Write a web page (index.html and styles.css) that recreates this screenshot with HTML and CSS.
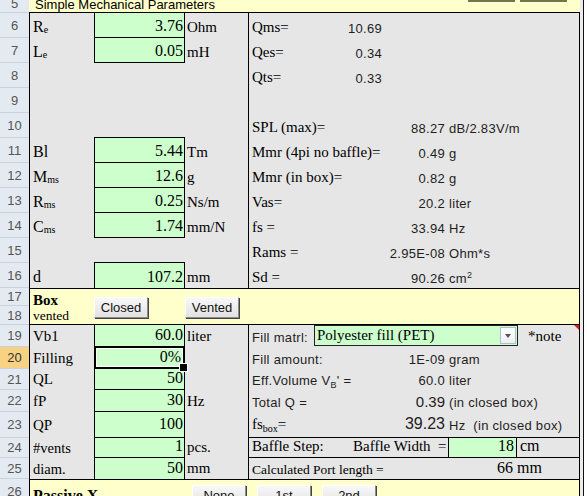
FILE: index.html
```html
<!DOCTYPE html>
<html lang="en">
<head>
<meta charset="utf-8">
<title>Simple Mechanical Parameters</title>
<link rel="stylesheet" href="styles.css">
</head>
<body>
<div class="sheet">
  <div class="heads">
    <div class="rh h13 r5">5</div>
    <div class="rh h25">6</div>
    <div class="rh h25">7</div>
    <div class="rh h25">8</div>
    <div class="rh h25">9</div>
    <div class="rh h25">10</div>
    <div class="rh h25">11</div>
    <div class="rh h25">12</div>
    <div class="rh h25">13</div>
    <div class="rh h25">14</div>
    <div class="rh h25">15</div>
    <div class="rh h25">16</div>
    <div class="rh h18">17</div>
    <div class="rh h19">18</div>
    <div class="rh h22">19</div>
    <div class="rh h22 cur">20</div>
    <div class="rh h21">21</div>
    <div class="rh h22">22</div>
    <div class="rh h26">23</div>
    <div class="rh h20">24</div>
    <div class="rh h21">25</div>
    <div class="rh h25">26</div>
  </div>

  <div class="grid">
    <div class="title">
      <span class="title-text">Simple Mechanical Parameters</span>
      <div class="tbtns"><span class="tbtn"></span><span class="tbtn"></span></div>
    </div>

    <div class="upper">
      <div class="row h25">
        <div class="lab">R<span class="sm">e</span></div>
        <div class="val g">3.76</div>
        <div class="unit">Ohm</div>
        <div class="rp"><span class="k q">Qms=</span><span class="v q">10.69</span></div>
      </div>
      <div class="row h25">
        <div class="lab">L<span class="sm">e</span></div>
        <div class="val g">0.05</div>
        <div class="unit">mH</div>
        <div class="rp"><span class="k q">Qes=</span><span class="v q">0.34</span></div>
      </div>
      <div class="row h25">
        <div class="lab"></div>
        <div class="val"></div>
        <div class="unit"></div>
        <div class="rp"><span class="k q">Qts=</span><span class="v q">0.33</span></div>
      </div>
      <div class="row h25">
        <div class="lab"></div>
        <div class="val"></div>
        <div class="unit"></div>
        <div class="rp"></div>
      </div>
      <div class="row h25">
        <div class="lab"></div>
        <div class="val cap"></div>
        <div class="unit"></div>
        <div class="rp"><span class="k m">SPL (max)=</span><span class="v m">88.27</span><span class="u">dB/2.83V/m</span></div>
      </div>
      <div class="row h25">
        <div class="lab">Bl</div>
        <div class="val g">5.44</div>
        <div class="unit">Tm</div>
        <div class="rp"><span class="k m">Mmr (4pi no baffle)=</span><span class="v m">0.49</span><span class="u">g</span></div>
      </div>
      <div class="row h25">
        <div class="lab">M<span class="sm">ms</span></div>
        <div class="val g">12.6</div>
        <div class="unit">g</div>
        <div class="rp"><span class="k m">Mmr (in box)=</span><span class="v m">0.82</span><span class="u">g</span></div>
      </div>
      <div class="row h25">
        <div class="lab">R<span class="sm">ms</span></div>
        <div class="val g">0.25</div>
        <div class="unit">Ns/m</div>
        <div class="rp"><span class="k m">Vas=</span><span class="v m">20.2</span><span class="u">liter</span></div>
      </div>
      <div class="row h25">
        <div class="lab">C<span class="sm">ms</span></div>
        <div class="val g">1.74</div>
        <div class="unit">mm/N</div>
        <div class="rp"><span class="k m">fs =</span><span class="v m">33.94</span><span class="u">Hz</span></div>
      </div>
      <div class="row h25">
        <div class="lab"></div>
        <div class="val cap"></div>
        <div class="unit"></div>
        <div class="rp"><span class="k m">Rams =</span><span class="v m">2.95E-08</span><span class="u">Ohm*s</span></div>
      </div>
      <div class="row h25">
        <div class="lab">d</div>
        <div class="val g nb">107.2</div>
        <div class="unit">mm</div>
        <div class="rp"><span class="k m">Sd =</span><span class="v m">90.26</span><span class="u">cm<sup>2</sup></span></div>
      </div>
    </div>

    <div class="boxband">
      <div class="boxlab"><b>Box</b><span>vented</span></div>
      <div class="btn">Closed</div>
      <div class="btn">Vented</div>
    </div>

    <div class="lower">
      <div class="row h22">
        <div class="lab">Vb1</div>
        <div class="val g">60.0</div>
        <div class="unit">liter</div>
        <div class="rp fill note">
          <span class="k sans">Fill matrl:</span>
          <div class="dd"><span class="dd-text">Polyester fill (PET)</span><span class="arrow"></span></div>
          <span class="note-t">*note</span>
        </div>
      </div>
      <div class="row h22">
        <div class="lab">Filling</div>
        <div class="val g sel">0%</div>
        <div class="unit"></div>
        <div class="rp"><span class="k m sans">Fill amount:</span><span class="v m">1E-09</span><span class="u">gram</span></div>
      </div>
      <div class="row h21">
        <div class="lab">QL</div>
        <div class="val g">50</div>
        <div class="unit"></div>
        <div class="rp"><span class="k m sans">Eff.Volume V<sub>B</sub>' =</span><span class="v m">60.0</span><span class="u">liter</span></div>
      </div>
      <div class="row h22">
        <div class="lab">fP</div>
        <div class="val g">30</div>
        <div class="unit">Hz</div>
        <div class="rp"><span class="k m sans">Total Q =</span><span class="v m big">0.39</span><span class="u">(in closed box)</span></div>
      </div>
      <div class="row h26">
        <div class="lab">QP</div>
        <div class="val g">100</div>
        <div class="unit"></div>
        <div class="rp sep"><span class="k m">fs<sub>box</sub>=</span><span class="v m big2">39.23</span><span class="u">Hz&nbsp; (in closed box)</span></div>
      </div>
      <div class="row h20">
        <div class="lab s">#vents</div>
        <div class="val g">1</div>
        <div class="unit">pcs.</div>
        <div class="rp baffle"><span class="bs">Baffle Step:</span><span class="bwl">Baffle Width  =</span><span class="bw">18</span><span class="bu">cm</span></div>
      </div>
      <div class="row h21">
        <div class="lab s">diam.</div>
        <div class="val g nb">50</div>
        <div class="unit">mm</div>
        <div class="rp"><span class="k port">Calculated Port length =</span><span class="v port">66</span><span class="u port">mm</span></div>
      </div>
    </div>

    <div class="xband">
      <div class="xlab">Passive X</div>
      <div class="btn">None</div>
      <div class="btn">1st</div>
      <div class="btn">2nd</div>
    </div>
  </div>

  <div class="edge"></div>
</div>
</body>
</html>
```

FILE: styles.css
```css
* { box-sizing: border-box; margin: 0; padding: 0; }
html, body { background: #fff; }
body {
  margin: 0;
  width: 587px;
  height: 496px;
  overflow: hidden;
  font-family: "Liberation Serif", "Times New Roman", serif;
  color: #000;
}
.sheet { display: flex; align-items: flex-start; height: 496px; overflow: hidden; }

/* row headers */
.heads {
  flex: none;
  width: 29px;
  background: #e4eaf1;
  font: 13px/1 "Liberation Sans", Arial, sans-serif;
  color: #555;
}
.rh { display: flex; align-items: center; justify-content: center; border-bottom: 1px solid #c9d2dd; }
.rh.r5 { align-items: flex-end; padding-bottom: 2px; }
.rh.cur { background: #f7d282; color: #333; }
.h13 { height: 13px; }
.h18 { height: 18px; }
.h19 { height: 19px; }
.h20 { height: 20px; }
.h21 { height: 21px; }
.h22 { height: 22px; }
.h25 { height: 25px; }
.h26 { height: 26px; }

.grid { flex: none; width: 551px; }
.edge {
  flex: none;
  width: 7px;
  height: 496px;
  background: linear-gradient(to right, #ececec 0 3px, #111 3px 4px, #fff 4px);
}

/* row 5 title */
.title {
  height: 13px;
  background: #ffffcc;
  border-bottom: 1px solid #000;
  display: flex;
  align-items: flex-end;
  padding-left: 6px;
  font: 13px/12px "Liberation Sans", Arial, sans-serif;
}
.title-text { padding-bottom: 1px; }
.tbtns { margin-left: auto; margin-right: 13px; align-self: flex-start; display: flex; gap: 5px; }
.tbtn { width: 47px; height: 2px; background: #77734c; }

/* sheet rows */
.upper, .lower { border-left: 1px solid #000; background: #e6e6e6; }
.row { display: flex; }
.row > div {
  display: flex;
  align-items: flex-end;
  line-height: 1;
  padding-bottom: 3px;
  white-space: nowrap;
}
.row.h26 > div { padding-bottom: 5px; }

.lab { width: 64px; padding-left: 3px; font-size: 16px; }
.lab .sm { font-size: 10px; }
.lower .lab { font-size: 15px; }
.lower .lab.s { font-size: 14.5px; }

.val { width: 91px; justify-content: flex-end; padding-right: 1px; font-size: 16px; }
.val.g { background: #ccffcc; border: 1px solid #000; border-top: 0; }
.val.cap { border-bottom: 1px solid #000; }
.val.nb { border-bottom: 0; }
.val.sel {
  position: relative;
  box-shadow: inset 0 0 0 1px #000, inset 0 0 0 2px #fff;
  padding-right: 3px;
}
.val.sel::after {
  content: "";
  position: absolute;
  right: -4px;
  bottom: -4px;
  width: 7px;
  height: 7px;
  background: #000;
  border: 1px solid #fff;
}

.unit { width: 63px; padding-left: 2px; font-size: 15px; }

.rp {
  width: 332px;
  border-left: 1px solid #000;
  border-right: 1px solid #000;
  position: relative;
  font-size: 15px;
}
.rp > span { white-space: pre; }
.rp.sep { border-bottom: 1px solid #000; }
.rp.note::after {
  content: "";
  position: absolute;
  top: 0;
  right: 0;
  border-top: 5px solid #e01818;
  border-left: 5px solid transparent;
}

.k { padding-left: 3px; }
.k.q { width: 92px; }
.k.m { width: 136px; }
.k.sans { font: 13px/1 "Liberation Sans", Arial, sans-serif; letter-spacing: .3px; color: #1e1e1e; }
.k sub { font-size: 10px; vertical-align: -3px; line-height: 0; }
.k.sans sub { font-size: 9px; }
.k.port { width: 224px; font-size: 13.5px; }

.v {
  font: 13px/1 "Liberation Sans", Arial, sans-serif;
  letter-spacing: .3px;
  text-align: right;
  color: #1e1e1e;
}
.v.q { width: 41px; }
.v.m { width: 60px; }
.v.big { font-size: 15px; letter-spacing: 0; }
.v.big2 { font-size: 16px; letter-spacing: 0; }
.v.port { width: 40px; font: 16px/1 "Liberation Serif", "Times New Roman", serif; letter-spacing: 0; color: #000; }

.u {
  font: 13px/1 "Liberation Sans", Arial, sans-serif;
  letter-spacing: .3px;
  padding-left: 4px;
  color: #1e1e1e;
}
.u sup { font-size: 9px; vertical-align: 5px; line-height: 0; }
.u.port { font: 16px/1 "Liberation Serif", "Times New Roman", serif; letter-spacing: 0; color: #000; }

/* fill material dropdown */
.rp.fill > .k { width: 65px; }
.dd {
  align-self: flex-start;
  width: 204px;
  height: 21px;
  background: #ccffcc;
  border: 1px solid #222;
  display: flex;
  align-items: center;
  padding-left: 2px;
  font-size: 15px;
  line-height: 1;
  white-space: nowrap;
}
.dd .arrow {
  margin-left: auto;
  margin-right: 1px;
  width: 16px;
  height: 17px;
  border: 1px solid #b4bcc8;
  background: linear-gradient(#ffffff, #eceff3);
  display: flex;
  align-items: center;
  justify-content: center;
}
.dd .arrow::before {
  content: "";
  border-top: 4px solid #555;
  border-left: 3.5px solid transparent;
  border-right: 3.5px solid transparent;
}
.note-t { margin-left: 10px; font-size: 15px; }

/* baffle step row */
.rp.baffle { padding-bottom: 0; align-items: stretch; border-bottom: 1px solid #000; }
.rp.baffle > span {
  display: flex;
  align-items: flex-end;
  padding-bottom: 3px;
  font-size: 15px;
  line-height: 1;
}
.rp.baffle > .bs { width: 100px; padding-left: 3px; }
.rp.baffle > .bwl { width: 99px; padding-left: 4px; }
.rp.baffle > .bw {
  width: 69px;
  background: #ccffcc;
  border-left: 1px solid #000;
  border-right: 1px solid #000;
  justify-content: flex-end;
  padding-right: 2px;
  font-size: 16px;
}
.rp.baffle > .bu { padding-left: 3px; font-size: 16px; }

/* yellow bands */
.boxband {
  height: 37px;
  background: #ffffcc;
  border: 1px solid #000;
  display: flex;
  align-items: flex-start;
}
.boxlab {
  width: 64px;
  height: 35px;
  padding: 0 0 1px 3px;
  display: flex;
  flex-direction: column;
  justify-content: flex-end;
}
.boxlab b { font-size: 15px; line-height: 17px; }
.boxlab span { font-size: 13.5px; line-height: 14px; }

.btn {
  flex: none;
  width: 54px;
  height: 21px;
  margin-top: 8px;
  display: flex;
  align-items: center;
  justify-content: center;
  font: 13px/1 "Liberation Sans", Arial, sans-serif;
  color: #111;
  background: linear-gradient(#f8f8f8, #e2e2e2);
  border: 1px solid;
  border-color: #fff #8c8c8c #8c8c8c #fff;
  box-shadow: 1px 1px 0 #444;
}
.boxband .btn + .btn { margin-left: 37px; }

.xband {
  height: 30px;
  background: #ffffcc;
  border: 1px solid #000;
  border-bottom: 0;
  display: flex;
  align-items: flex-start;
}
.xlab { width: 162px; padding: 8px 0 0 3px; font-weight: bold; font-size: 16px; line-height: 16px; }
.xband .btn { margin-top: 5px; }
.xband .btn + .btn { margin-left: 11px; }
```
